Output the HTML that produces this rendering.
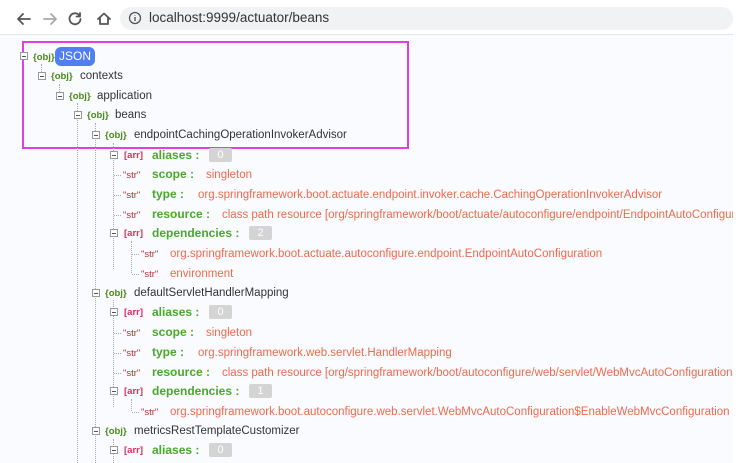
<!DOCTYPE html>
<html><head><meta charset="utf-8"><style>
*{margin:0;padding:0;box-sizing:border-box}
body{width:748px;height:463px;overflow:hidden;background:#fff;font-family:"Liberation Sans",Arial,sans-serif;position:relative}
.page{position:absolute;left:0;top:34px;width:733px;height:429px;background:#fafbff;border-top:1px solid #e4e5ea}
.clip{position:absolute;left:0;top:0;width:733px;height:463px;overflow:hidden}
.addr{position:absolute;left:120px;top:7px;width:613px;height:23px;background:#f1f2f3;border-radius:12px}
.url{position:absolute;left:149px;top:10px;font-size:13.5px;color:#333}
.r{position:absolute;white-space:nowrap;font-size:11.5px;line-height:14px;color:#333}
.tg{position:absolute;width:8px;height:8px;border:1px solid #999;background:#fff}
.tg:after{content:"";position:absolute;left:1px;top:3px;width:4px;height:1px;background:#555}
.obj{color:#4a8a1a;font-size:9.5px;font-weight:bold}
.arr{color:#e0305a;font-size:9.5px;font-weight:bold}
.str{color:#b03030;font-size:9.5px}
.k{color:#4aa82a;font-weight:bold;font-size:12px}
.v{color:#f06a4a}
.b{position:absolute;background:#d4d4d4;color:#fff;font-size:11px;text-align:center;border-radius:2px;height:14px;line-height:14px;width:23px}
.vl{position:absolute;border-left:1px dotted #aaa;width:0}
.hl{position:absolute;border-top:1px dotted #aaa;height:0}
</style></head><body>
<svg style="position:absolute;left:14px;top:10px" width="110" height="18" fill="none" stroke-width="1.8" stroke-linecap="round" stroke-linejoin="round">
<path d="M4 9h12M4 9l5-5M4 9l5 5" stroke="#555"/>
<path d="M30 9h12M42 9l-5-5M42 9l-5 5" stroke="#aaa"/>
<path d="M65 5a5.5 5.5 0 1 0 1.5 4M66 3v3.5h-3.5" stroke="#555"/>
<path d="M84 9l6-5.5 6 5.5M86 8v6h8v-6" stroke="#555"/>
</svg>
<div class="addr"></div>
<svg style="position:absolute;left:128px;top:11px" width="14" height="14"><circle cx="7" cy="7" r="5.5" fill="none" stroke="#555" stroke-width="1.3"/><path d="M7 6v4M7 4v.5" stroke="#555" stroke-width="1.4"/></svg>
<div class="url">localhost:9999/actuator/beans</div>
<div class="page"></div>
<div class="clip">
<div style="position:absolute;left:22px;top:41px;width:387px;height:108px;border:2px solid #e040e0"></div>

<div class="vl" style="left:41px;top:64px;height:10px"></div>
<div class="vl" style="left:59px;top:84px;height:10px"></div>
<div class="vl" style="left:77px;top:103px;height:360px"></div>
<div class="vl" style="left:95px;top:123px;height:340px"></div>
<div class="vl" style="left:113px;top:143px;height:126px"></div>
<div class="vl" style="left:131px;top:241px;height:32px"></div>
<div class="vl" style="left:113px;top:300px;height:107px"></div>
<div class="vl" style="left:131px;top:399px;height:12px"></div>
<div class="vl" style="left:113px;top:439px;height:24px"></div>

<div class="tg" style="left:20px;top:52px"></div><div class="r" style="left:33px;top:50px"><span class="obj">{obj}</span></div>
<div style="position:absolute;left:55px;top:47px;width:40px;height:19px;background:#4f7ff0;border-radius:6px;color:#fff;font-size:12px;line-height:19px;text-align:center">JSON</div>

<div class="tg" style="left:38px;top:72px"></div><div class="r" style="left:51px;top:69px"><span class="obj">{obj}</span></div><div class="r" style="left:80px;top:69px">contexts</div>
<div class="tg" style="left:56px;top:92px"></div><div class="r" style="left:69px;top:89px"><span class="obj">{obj}</span></div><div class="r" style="left:97px;top:89px">application</div>
<div class="tg" style="left:74px;top:111px"></div><div class="r" style="left:87px;top:108px"><span class="obj">{obj}</span></div><div class="r" style="left:115px;top:108px">beans</div>
<div class="tg" style="left:92px;top:131px"></div><div class="r" style="left:105px;top:128px"><span class="obj">{obj}</span></div><div class="r" style="left:134px;top:128px">endpointCachingOperationInvokerAdvisor</div>

<div class="tg" style="left:110px;top:151px"></div><div class="r" style="left:124px;top:148px"><span class="arr">[arr]</span></div><div class="r k" style="left:152px;top:148px">aliases :</div><div class="b" style="left:209px;top:148px">0</div>
<div class="hl" style="left:114px;top:175px;width:7px"></div><div class="r" style="left:123px;top:168px"><span class="str">"str"</span></div><div class="r k" style="left:152px;top:167px">scope :</div><div class="r v" style="left:206px;top:168px">singleton</div>
<div class="hl" style="left:114px;top:195px;width:7px"></div><div class="r" style="left:123px;top:188px"><span class="str">"str"</span></div><div class="r k" style="left:152px;top:187px">type :</div><div class="r v" style="left:198px;top:188px">org.springframework.boot.actuate.endpoint.invoker.cache.CachingOperationInvokerAdvisor</div>
<div class="hl" style="left:114px;top:215px;width:7px"></div><div class="r" style="left:123px;top:208px"><span class="str">"str"</span></div><div class="r k" style="left:152px;top:207px">resource :</div><div class="r v" style="left:222px;top:208px">class path resource [org/springframework/boot/actuate/autoconfigure/endpoint/EndpointAutoConfiguration.class]</div>
<div class="tg" style="left:110px;top:229px"></div><div class="r" style="left:124px;top:226px"><span class="arr">[arr]</span></div><div class="r k" style="left:152px;top:226px">dependencies :</div><div class="b" style="left:249px;top:226px">2</div>
<div class="hl" style="left:132px;top:254px;width:7px"></div><div class="r" style="left:141px;top:247px"><span class="str">"str"</span></div><div class="r v" style="left:170px;top:247px">org.springframework.boot.actuate.autoconfigure.endpoint.EndpointAutoConfiguration</div>
<div class="hl" style="left:132px;top:274px;width:7px"></div><div class="r" style="left:141px;top:267px"><span class="str">"str"</span></div><div class="r v" style="left:170px;top:267px">environment</div>

<div class="tg" style="left:92px;top:289px"></div><div class="r" style="left:105px;top:286px"><span class="obj">{obj}</span></div><div class="r" style="left:134px;top:286px">defaultServletHandlerMapping</div>
<div class="tg" style="left:110px;top:308px"></div><div class="r" style="left:124px;top:305px"><span class="arr">[arr]</span></div><div class="r k" style="left:152px;top:305px">aliases :</div><div class="b" style="left:209px;top:305px">0</div>
<div class="hl" style="left:114px;top:333px;width:7px"></div><div class="r" style="left:123px;top:326px"><span class="str">"str"</span></div><div class="r k" style="left:152px;top:325px">scope :</div><div class="r v" style="left:206px;top:326px">singleton</div>
<div class="hl" style="left:114px;top:353px;width:7px"></div><div class="r" style="left:123px;top:346px"><span class="str">"str"</span></div><div class="r k" style="left:152px;top:345px">type :</div><div class="r v" style="left:198px;top:346px">org.springframework.web.servlet.HandlerMapping</div>
<div class="hl" style="left:114px;top:373px;width:7px"></div><div class="r" style="left:123px;top:366px"><span class="str">"str"</span></div><div class="r k" style="left:152px;top:365px">resource :</div><div class="r v" style="left:222px;top:366px">class path resource [org/springframework/boot/autoconfigure/web/servlet/WebMvcAutoConfiguration$EnableWebMvcConfiguration.class]</div>
<div class="tg" style="left:110px;top:387px"></div><div class="r" style="left:124px;top:384px"><span class="arr">[arr]</span></div><div class="r k" style="left:152px;top:384px">dependencies :</div><div class="b" style="left:249px;top:384px">1</div>
<div class="hl" style="left:132px;top:412px;width:7px"></div><div class="r" style="left:141px;top:405px"><span class="str">"str"</span></div><div class="r v" style="left:170px;top:405px">org.springframework.boot.autoconfigure.web.servlet.WebMvcAutoConfiguration$EnableWebMvcConfiguration</div>

<div class="tg" style="left:92px;top:427px"></div><div class="r" style="left:105px;top:424px"><span class="obj">{obj}</span></div><div class="r" style="left:134px;top:424px">metricsRestTemplateCustomizer</div>
<div class="tg" style="left:110px;top:446px"></div><div class="r" style="left:124px;top:443px"><span class="arr">[arr]</span></div><div class="r k" style="left:152px;top:443px">aliases :</div><div class="b" style="left:209px;top:443px">0</div>
</div>
</body></html>
